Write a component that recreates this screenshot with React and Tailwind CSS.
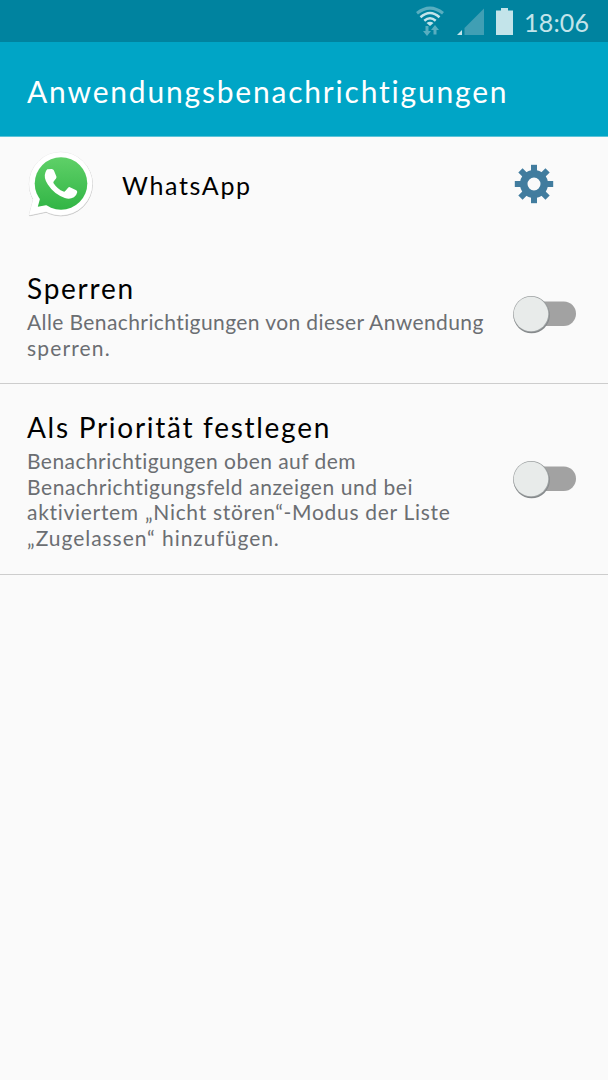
import React from "react";

function StatusBar() {
  return (
    <div className="flex h-[42px] items-start bg-[#00839f] pl-[408px]">
      <svg className="h-[42px] w-[108px] shrink-0" viewBox="0 0 108 42">
        <g fill="none">
          <path d="M9 13.3Q22 3 35 13.3" stroke="#58aec0" strokeWidth="3" />
          <path d="M12.500 17.300Q22 8.800 31.500 17.300M16.300 20.800Q22 15.800 27.700 20.800" stroke="#c3e4ea" strokeWidth="2.500" />
        </g>
        <path d="M18.500 23Q22 20.500 25.500 23L22 26Z" fill="#c3e4ea" />
        <path d="M17.500 26h3v5H23L19 36 15 31h2.500ZM25.500 34.500v-4.500H23l4-5 4 5h-2.500v4.500Z" fill="#58aec0" />
        <path d="M56.500 35V28L76 8.500V35Z" fill="#409fb4" />
        <path d="M49 35L54 30V35Z" fill="#c3e4ea" />
        <path d="M88 10.500h5V8h7v2.500h5V35H88Z" fill="#c3e4ea" />
      </svg>
      <span className="ml-[8px] mt-[5px] text-[25px] leading-[34px] tracking-[0.2px] text-[#c3e4ea]">18:06</span>
    </div>
  );
}

function Bubble(props) {
  return (
    <g {...props}>
      <circle cx="36.700" cy="35.700" r="31.500" />
      <path d="M5.300 66.500Q4.800 67.200 6 67L22.500 63.500L40 50L9.500 50.500Z" />
    </g>
  );
}

function AppLogo() {
  return (
    <svg className="h-[72px] w-[72px] shrink-0" viewBox="0 0 72 72">
      <defs>
        <linearGradient id="green" gradientUnits="userSpaceOnUse" x1="0" y1="9" x2="0" y2="62">
          <stop offset="0" stopColor="#5fd068" />
          <stop offset="1" stopColor="#31b545" />
        </linearGradient>
      </defs>
      <Bubble fill="#c4c4c4" stroke="#c4c4c4" strokeWidth=".8" transform="translate(.2 .7)" />
      <Bubble fill="#fff" stroke="#e4e4e4" strokeWidth=".8" />
      <Bubble fill="#fff" />
      <g fill="url(#green)">
        <circle cx="37" cy="35.500" r="26.300" />
        <path d="M13.800 58.800L17.500 45L35 45L24.500 56.800Z" />
      </g>
      <path d="M23 21.200L28 20.800Q30 21 30.600 22.500L33.400 29.500Q33.700 30.600 33 31.600L30.300 35Q29.600 36 30.200 37Q34.500 43.500 41.500 46.600Q42.700 47 43.500 46L46.700 42.200Q47.600 41.200 48.800 41.600L56 45Q57.400 45.800 57 47.600Q56 51.700 53.300 53Q48.500 55.700 43 53.800Q30.500 49.300 23.500 38.200Q18.500 30.500 21 24.500Q21.800 22.300 23 21.200Z" fill="#fff" transform="translate(3 2.600) scale(.88)" />
    </svg>
  );
}

function Gear() {
  const tooth = [0, 45, 90, 135, 180, 225, 270, 315];
  return (
    <svg className="h-10 w-10 shrink-0" viewBox="-20 -20 40 40" fill="#417c9e">
      <path fillRule="evenodd" d="M-14 0a14 14 0 1 0 28 0a14 14 0 1 0 -28 0ZM-6.500 0a6.500 6.500 0 1 0 13 0a6.500 6.500 0 1 0 -13 0Z" />
      {tooth.map((a) => (
        <rect key={a} x="-3" y="-19.200" width="6" height="7.500" transform={`rotate(${a})`} />
      ))}
    </svg>
  );
}

function Toggle() {
  return (
    <svg className="h-[44px] w-[70px] shrink-0" viewBox="0 0 70 44">
      <rect x="20" y="9.500" width="47" height="24.500" rx="12.200" fill="#a2a2a2" />
      <circle cx="22.600" cy="23.100" r="18.200" fill="#85898b" />
      <circle cx="22.200" cy="22" r="18" fill="#9ea2a3" />
      <circle cx="22" cy="22" r="17.300" fill="#e8ebea" />
    </svg>
  );
}

function Setting({ title, titleClass, lines, className }) {
  return (
    <section className={"flex items-center border-b border-[#cdcdcd] pl-[27px] " + className}>
      <div className="h-full w-[482px] shrink-0 pt-[22px]">
        <h2 className={"whitespace-nowrap text-[28px] leading-[42px] text-black " + titleClass}>{title}</h2>
        <p className="text-[21px] leading-[25.700px] text-[#6b6e72]">
          {lines.map(([text, spacing]) => (
            <span key={text} className={"block whitespace-nowrap " + spacing}>{text}</span>
          ))}
        </p>
      </div>
      <Toggle />
    </section>
  );
}

export default function App() {
  return (
    <main className="h-[1080px] w-[608px] overflow-hidden bg-[#fafafa] font-[Lato,sans-serif]">
      <StatusBar />
      <header className="flex h-[95px] items-center border-b border-[#5cc3d8] bg-[#00a5c6] pl-[27px] text-white">
        <h1 className="pt-[3px] text-[30px] leading-9 tracking-[1.800px]">Anwendungsbenachrichtigungen</h1>
      </header>
      <div className="flex h-[108px] items-start pl-6">
        <div className="flex h-[94px] items-center">
          <AppLogo />
          <span className="ml-[26px] w-[392px] pt-[3px] text-[25px] tracking-[1.650px] text-black">WhatsApp</span>
          <Gear />
        </div>
      </div>
      <Setting
        className="h-[139px]"
        title="Sperren"
        titleClass="tracking-[1.750px]"
        lines={[
          ["Alle Benachrichtigungen von dieser Anwendung", "tracking-[0.400px]"],
          ["sperren.", "tracking-[1.150px]"],
        ]}
      />
      <Setting
        className="h-[191px]"
        title="Als Priorität festlegen"
        titleClass="tracking-[1.720px]"
        lines={[
          ["Benachrichtigungen oben auf dem", "tracking-[0.450px]"],
          ["Benachrichtigungsfeld anzeigen und bei", "tracking-[0.560px]"],
          ["aktiviertem „Nicht stören“-Modus der Liste", "tracking-[0.700px]"],
          ["„Zugelassen“ hinzufügen.", "tracking-[0.960px]"],
        ]}
      />
    </main>
  );
}
